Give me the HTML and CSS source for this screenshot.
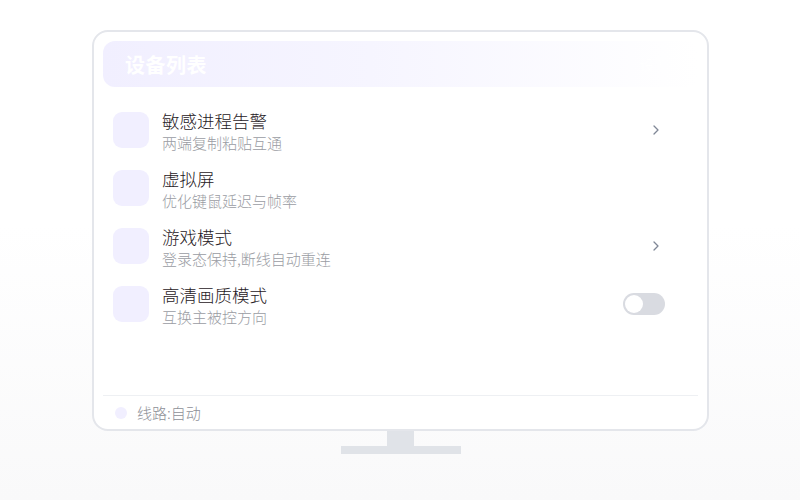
FILE: index.html
```html
<!DOCTYPE html>
<html lang="zh">
<head>
<meta charset="utf-8">
<link rel="stylesheet" href="styles.css">
</head>
<body>
<div class="stage">
  <div class="monitor">
    <div class="screen">
      <div class="header">
        <span class="title">设备列表</span>
        <span class="extra">设置</span>
      </div>
      <div class="list">
        <div class="row">
          <div class="icon"></div>
          <div class="text"><div class="name">敏感进程告警</div><div class="desc">两端复制粘贴互通</div></div>
          <svg class="chev" width="6" height="10" viewBox="0 0 6 10"><path d="M1 1 L5 5 L1 9" fill="none" stroke="#7f8796" stroke-width="1.3" stroke-linecap="round" stroke-linejoin="round"/></svg>
        </div>
        <div class="row">
          <div class="icon"></div>
          <div class="text"><div class="name">虚拟屏</div><div class="desc">优化键鼠延迟与帧率</div></div>
        </div>
        <div class="row">
          <div class="icon"></div>
          <div class="text"><div class="name">游戏模式</div><div class="desc">登录态保持,断线自动重连</div></div>
          <svg class="chev" width="6" height="10" viewBox="0 0 6 10"><path d="M1 1 L5 5 L1 9" fill="none" stroke="#7f8796" stroke-width="1.3" stroke-linecap="round" stroke-linejoin="round"/></svg>
        </div>
        <div class="row">
          <div class="icon"></div>
          <div class="text"><div class="name">高清画质模式</div><div class="desc">互换主被控方向</div></div>
          <div class="toggle"><div class="knob"></div></div>
        </div>
      </div>
      <div class="footer">
        <span class="dot"></span><span class="route">线路:自动</span>
      </div>
    </div>
    <div class="neck"></div>
    <div class="base"></div>
  </div>
</div>
</body>
</html>
```
FILE: styles.css
```css
* { box-sizing: border-box; }
html, body { margin: 0; padding: 0; }
body {
  width: 800px;
  height: 500px;
  background: linear-gradient(180deg, #ffffff 0%, #ffffff 45%, #f9f9fa 100%);
  font-family: "Noto Sans CJK SC", "Noto Sans", sans-serif;
  overflow: hidden;
}
.stage {
  padding-top: 30px;
  display: flex;
  justify-content: center;
}
.monitor {
  display: flex;
  flex-direction: column;
  align-items: center;
  margin-left: 1px;
}
.screen {
  width: 617px;
  height: 401px;
  border: 2px solid #e4e6eb;
  border-radius: 16px;
  background: #fff;
  padding: 9px 9px 0 9px;
  display: flex;
  flex-direction: column;
}
.header {
  height: 46px;
  border-radius: 12px;
  background: linear-gradient(90deg, #f1efff 0%, #f6f5ff 45%, #ffffff 100%);
  display: flex;
  align-items: center;
  justify-content: space-between;
  padding: 0 30px 0 22px;
}
.title {
  color: #ffffff;
  font-size: 20px;
  font-weight: 700;
  letter-spacing: 0.5px;
}
.extra {
  color: #ffffff;
  font-size: 14px;
}
.list {
  flex: 1;
  padding: 25px 0 0 0;
  display: flex;
  flex-direction: column;
  gap: 22px;
}
.row {
  height: 36px;
  display: flex;
  align-items: center;
  padding-left: 10px;
  padding-right: 39px;
}
.icon {
  width: 36px;
  height: 36px;
  border-radius: 9px;
  background: #f1efff;
  flex: none;
}
.text {
  flex: 1;
  margin-left: 13px;
  margin-top: 6px;
  display: flex;
  flex-direction: column;
}
.name {
  font-size: 17.5px;
  line-height: 22px;
  color: #1f2024;
  font-weight: 300;
  margin-top: -2px;
}
.desc {
  font-size: 15px;
  line-height: 22px;
  color: #9a9ca3;
  font-weight: 300;
}
.chev {
  display: block;
  flex: none;
}
.toggle {
  width: 42px;
  height: 22px;
  border-radius: 11px;
  background: #d9dbe1;
  padding: 2px;
  margin-right: -6px;
}
.knob {
  width: 18px;
  height: 18px;
  border-radius: 50%;
  background: #fff;
}
.footer {
  height: 34px;
  border-top: 1px solid #eef0f3;
  display: flex;
  align-items: center;
  padding-left: 12px;
}
.dot {
  width: 12px;
  height: 12px;
  border-radius: 50%;
  background: #f1efff;
}
.route {
  margin-left: 10px;
  font-size: 15px;
  font-weight: 300;
  color: #8e9097;
}
.neck {
  width: 27px;
  height: 15px;
  background: #e0e3e8;
}
.base {
  width: 120px;
  height: 8px;
  background: #e0e3e8;
}
```
